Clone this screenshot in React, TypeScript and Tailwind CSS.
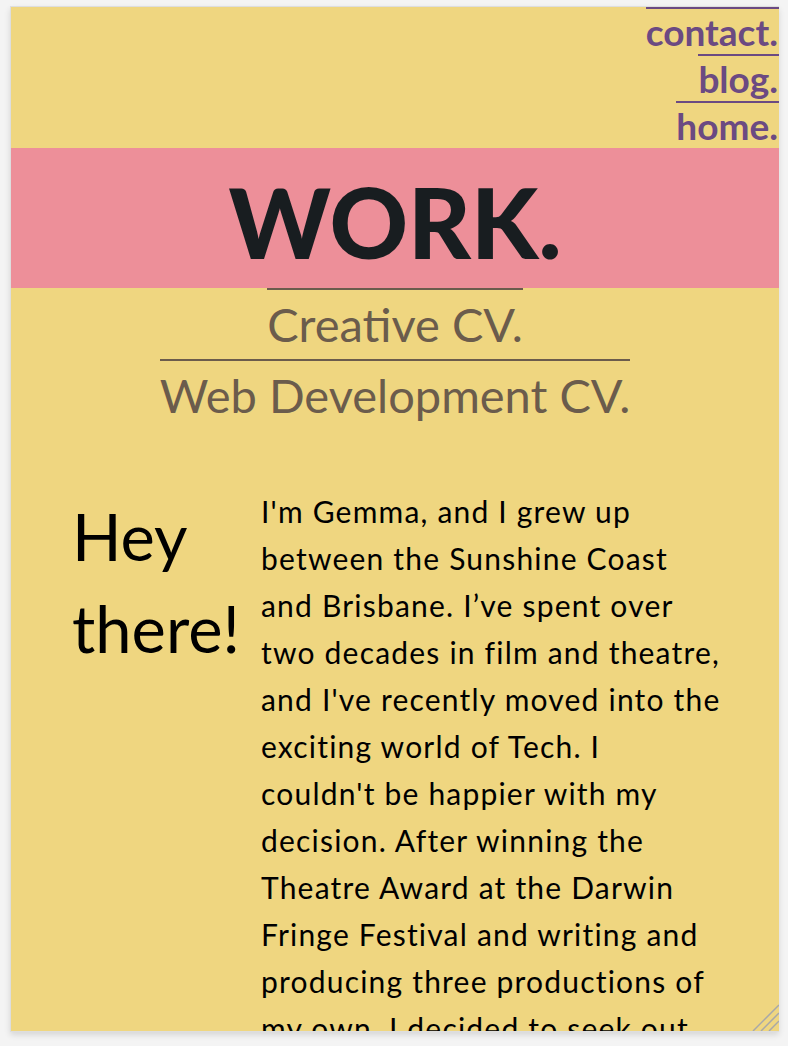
import React from 'react';

const navLinks = ['contact.', 'blog.', 'home.'];
const cvLinks = ['Creative CV.', 'Web Development CV.'];

const ResizeGrip: React.FC = () => (
  <svg
    className="absolute bottom-0 right-0"
    width="28"
    height="28"
    viewBox="0 0 28 28"
  >
    <line x1="2" y1="28" x2="28" y2="2" stroke="#a8a8a8" strokeWidth="1.5" />
    <line x1="10" y1="28" x2="28" y2="10" stroke="#a8a8a8" strokeWidth="1.5" />
    <line x1="18" y1="28" x2="28" y2="18" stroke="#a8a8a8" strokeWidth="1.5" />
  </svg>
);

export default function App() {
  return (
    <div className="min-h-screen bg-[#f4f4f4] pt-[6px] pl-[10px] font-['Lato',sans-serif]">
      <div className="relative h-[1026px] w-[769px] overflow-hidden border border-r-0 border-[#dedede] bg-[#efd680] shadow-[0_3px_6px_rgba(0,0,0,0.12)]">
        <nav className="flex flex-col items-end">
          {navLinks.map((link) => (
            <a
              key={link}
              href="#"
              className="border-t-2 border-[#6b4a82] pr-[1px] text-[37px] font-bold leading-[45px] text-[#6b4a82]"
            >
              {link}
            </a>
          ))}
        </nav>

        <header className="flex h-[140px] justify-center bg-[#ed8f99] pt-[25px]">
          <h1 className="text-[97px] font-black leading-none text-[#181d20]">WORK.</h1>
        </header>

        <div className="flex flex-col items-center">
          {cvLinks.map((link) => (
            <a
              key={link}
              href="#"
              className="border-t-2 border-[#6b5c4c] text-[47px] leading-[69px] text-[#6b5c4c]"
            >
              {link}
            </a>
          ))}
        </div>

        <section className="flex pl-[61px] pt-[58px]">
          <h2 className="mt-[2px] w-[189px] shrink-0 text-[65px] leading-[92px] text-black">
            Hey there!
          </h2>
          <p className="w-[460px] text-[30px] leading-[47px] tracking-[1.2px] text-black">
            I'm Gemma, and I grew up between the Sunshine Coast and Brisbane. I’ve spent over two
            decades in film and theatre, and I've recently moved into the exciting world of Tech. I
            couldn't be happier with my decision. After winning the Theatre Award at the Darwin
            Fringe Festival and writing and producing three productions of my own, I decided to seek
            out opportunities in web development.
          </p>
        </section>

        <ResizeGrip />
      </div>
    </div>
  );
}
